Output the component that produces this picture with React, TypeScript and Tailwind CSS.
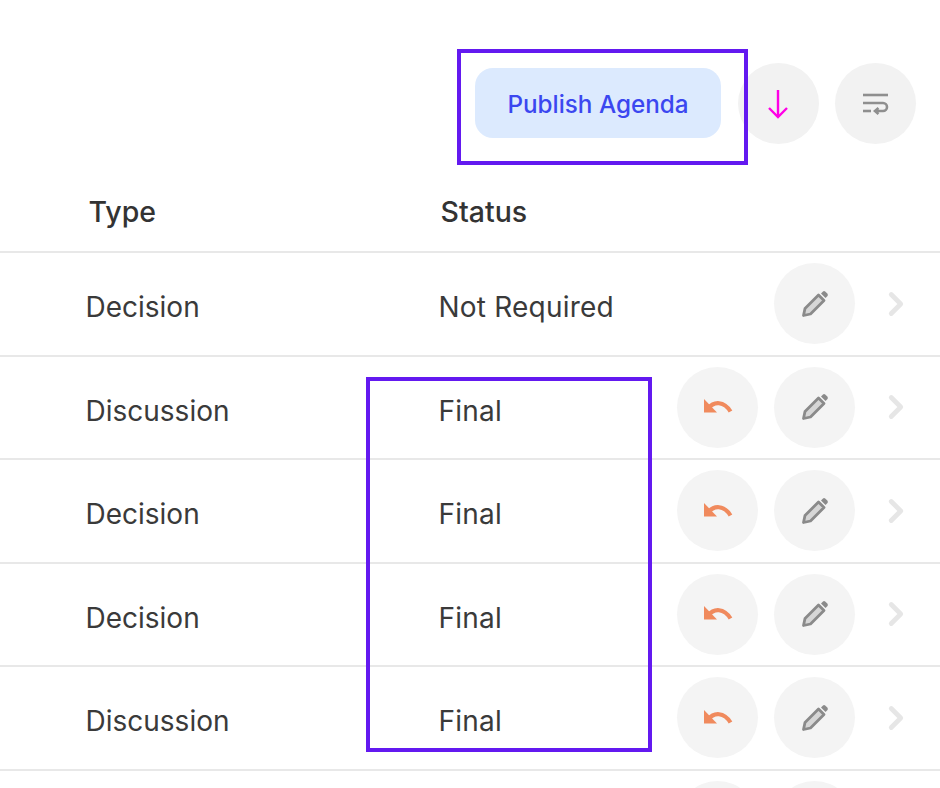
import { ChevronRight } from "lucide-react"

const rows = [
  { type: "Decision", status: "Not Required", undo: false },
  { type: "Discussion", status: "Final", undo: true },
  { type: "Decision", status: "Final", undo: true },
  { type: "Decision", status: "Final", undo: true },
  { type: "Discussion", status: "Final", undo: true },
]

function UndoIcon() {
  return (
    <svg width="30" height="20" viewBox="0 0 30 20" fill="none">
      <path d="M1 2 L1 15.5 L14 15.5 Z" fill="#f08a5d" />
      <path d="M5 11.5 C11 4 21 4 27.5 14.5" stroke="#f08a5d" strokeWidth="4.2" />
    </svg>
  )
}

function PencilIcon() {
  return (
    <svg width="28" height="28" viewBox="0 0 28 28" fill="none">
      <path d="M2.5 25.5 L4 18.5 L17.5 5 L23 10.5 L9.5 24 Z" fill="#d6d6d6" stroke="#8a8a8a" strokeWidth="2.8" strokeLinejoin="round" />
      <path d="M20 3.5 L22 1.5 Q23 0.7 24.2 1.5 L26.5 3.8 Q27.3 5 26.5 6 L24.5 8 Z" fill="#8a8a8a" />
    </svg>
  )
}

function WrapIcon() {
  return (
    <svg width="26" height="22" viewBox="0 0 26 22" fill="none" stroke="#8f8f8f" strokeWidth="2.6">
      <path d="M0 2 H25" />
      <path d="M0 10 H20 A4 4 0 0 1 20 18 H13" />
      <path d="M0 18 H8" />
      <path d="M15.5 15 L12 18 L15.5 21" />
    </svg>
  )
}

function PinkArrow() {
  return (
    <svg width="21" height="30" viewBox="0 0 21 30" fill="none" stroke="#ff00e6" strokeWidth="2.4">
      <path d="M10 1 V28" />
      <path d="M1 19 L10 28 L19 19" />
    </svg>
  )
}

function Circle({ children, bg = "bg-[#f4f4f4]" }: { children: React.ReactNode; bg?: string }) {
  return <div className={`w-[81px] h-[81px] rounded-full ${bg} flex items-center justify-center shrink-0`}>{children}</div>
}

export default function App() {
  return (
    <div className="relative w-[940px] h-[788px] overflow-hidden bg-white font-['Inter',sans-serif] text-[#3a3a3a]">
      <div className="flex items-start justify-end gap-4 pr-6 pt-[63px]">
        <button className="w-[246px] h-[70px] mt-[5px] mr-[1px] pt-[5px] rounded-[18px] bg-[#dceafe] text-[#3b47f0] text-[24.25px] font-[450]">
          Publish Agenda
        </button>
        <Circle bg="bg-[#f2f2f2]"><PinkArrow /></Circle>
        <Circle bg="bg-[#f2f2f2]"><WrapIcon /></Circle>
      </div>

      <div className="flex items-center h-[109px] pt-[29px] border-b-2 border-[#e8e8e8] text-[28.5px] font-[450] text-[#333333]">
        <div className="w-[440.5px] pl-[88.5px]">Type</div>
        <div>Status</div>
      </div>

      {rows.map((row, index) => (
        <div key={index} className="flex items-center h-[103.5px] border-b-2 border-[#e8e8e8] text-[28px]">
          <div className="w-[438.5px] pl-[85.5px] pt-[7px]">{row.type}</div>
          <div className="w-[238.5px] pt-[7px] tracking-[0.2px]">{row.status}</div>
          <div className="w-[81px] mr-4">{row.undo && <Circle><UndoIcon /></Circle>}</div>
          <Circle><PencilIcon /></Circle>
          <ChevronRight className="ml-[22px]" size={38} color="#e6e6e6" strokeWidth={3} />
        </div>
      ))}

      <div className="flex mt-[10px]">
        <div className="ml-[677px] mr-4"><Circle>{null}</Circle></div>
        <Circle>{null}</Circle>
      </div>

      {/* annotation boxes */}
      <div className="absolute left-[457px] top-[49px] w-[291px] h-[116px] border-4 border-[#6319f0]" />
      <div className="absolute left-[366px] top-[377px] w-[286px] h-[375px] border-4 border-[#6319f0]" />
    </div>
  )
}
